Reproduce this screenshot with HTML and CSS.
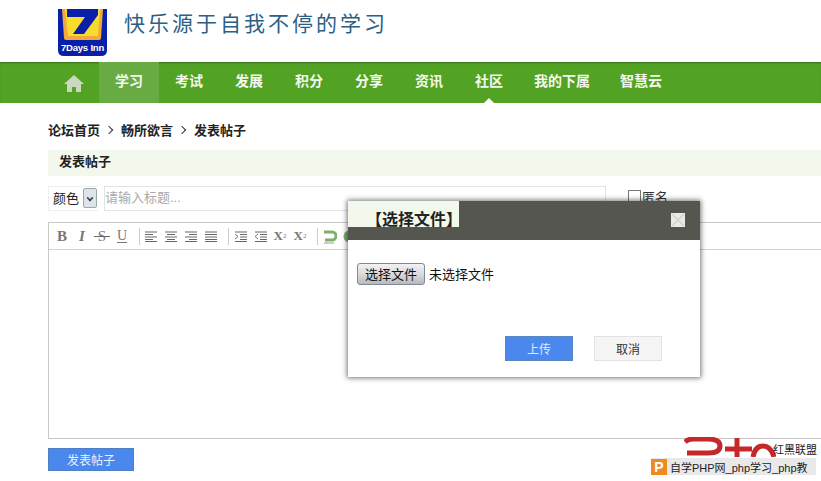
FILE: index.html
```html
<!DOCTYPE html>
<html lang="zh-CN">
<head>
    <meta charset="UTF-8">
    <meta name="viewport" content="width=device-width, initial-scale=1.0">
    <title>发表帖子</title>
    <link rel="stylesheet" href="styles.css">
</head>
<body>
    <svg width="0" height="0" class="defs">
        <symbol id="a-left" viewBox="0 0 12 11"><path d="M0 1h12M0 3.500h8M0 6h12M0 8.500h8M0 10.500h12" stroke="#666" fill="none"/></symbol>
        <symbol id="a-center" viewBox="0 0 12 11"><path d="M0 1h12M2 3.500h8M0 6h12M2 8.500h8M0 10.500h12" stroke="#666" fill="none"/></symbol>
        <symbol id="a-right" viewBox="0 0 12 11"><path d="M0 1h12M4 3.500h8M0 6h12M4 8.500h8M0 10.500h12" stroke="#666" fill="none"/></symbol>
        <symbol id="a-full" viewBox="0 0 12 11"><path d="M0 1h12M0 3.500h12M0 6h12M0 8.500h12M0 10.500h12" stroke="#666" fill="none"/></symbol>
        <symbol id="a-indent" viewBox="0 0 13 11"><path d="M1 1h12M6 3.500h7M6 6h7M6 8.500h7M1 10.500h12" stroke="#666" fill="none"/><path d="M1 3l3 2.500-3 2.500" stroke="#777" fill="none"/></symbol>
        <symbol id="a-outdent" viewBox="0 0 13 11"><path d="M1 1h12M6 3.500h7M6 6h7M6 8.500h7M1 10.500h12" stroke="#666" fill="none"/><path d="M4 3L1 5.500 4 8" stroke="#777" fill="none"/></symbol>
    </svg>

    <div class="header">
        <svg class="logo" width="50" height="47" viewBox="0 0 50 47">
            <path d="M0 0h49v41q0 6-6 6H6q-6 0-6-6z" fill="#0a1fa8"/>
            <path d="M4 0h41l-2 29q0 2-2 2H8q-2 0-2-2z" fill="#f0a93a"/>
            <path d="M7 0h35l-2 27H10z" fill="#f7dc2e"/>
            <path d="M9 0H40V6L26 25H15L27 8H9z" fill="#0a1fa8"/>
            <text x="24.500" y="42" text-anchor="middle" class="logo-text">7Days Inn</text>
        </svg>
        <div class="slogan">快乐源于自我不停的学习</div>
    </div>

    <div class="nav">
        <a class="nav-home" href="#">
            <svg width="20" height="17" viewBox="0 0 20 17">
                <path d="M10 0L0 9h3v8h5v-5h4v5h5V9h3z" fill="#cbd8c0"/>
            </svg>
        </a>
        <a class="nav-item active" href="#">学习</a>
        <a class="nav-item" href="#">考试</a>
        <a class="nav-item" href="#">发展</a>
        <a class="nav-item" href="#">积分</a>
        <a class="nav-item" href="#">分享</a>
        <a class="nav-item" href="#">资讯</a>
        <a class="nav-item current" href="#">社区</a>
        <a class="nav-item" href="#">我的下属</a>
        <a class="nav-item" href="#">智慧云</a>
    </div>

    <div class="content">
        <div class="crumbs">
            <span>论坛首页</span>
            <i class="crumb-arrow"></i>
            <span>畅所欲言</span>
            <i class="crumb-arrow"></i>
            <span>发表帖子</span>
        </div>
        <div class="title-bar">发表帖子</div>

        <div class="form-row">
            <div class="color-select">
                <span>颜色</span>
                <span class="select-btn"></span>
            </div>
            <div class="title-input">请输入标题...</div>
            <label class="anon"><span class="check"></span>匿名</label>
        </div>

        <div class="editor">
            <div class="toolbar">
                <span class="tool bold">B</span>
                <span class="tool italic">I</span>
                <span class="tool strike">S</span>
                <span class="tool under">U</span>
                <span class="sep"></span>
                <span class="tool"><svg width="12" height="11"><use href="#a-left"/></svg></span>
                <span class="tool"><svg width="12" height="11"><use href="#a-center"/></svg></span>
                <span class="tool"><svg width="12" height="11"><use href="#a-right"/></svg></span>
                <span class="tool"><svg width="12" height="11"><use href="#a-full"/></svg></span>
                <span class="sep"></span>
                <span class="tool"><svg width="13" height="11"><use href="#a-indent"/></svg></span>
                <span class="tool"><svg width="13" height="11"><use href="#a-outdent"/></svg></span>
                <span class="tool bold small">X<sub>2</sub></span>
                <span class="tool bold small">X<sup>2</sup></span>
                <span class="sep"></span>
                <span class="tool">
                    <svg width="15" height="15" viewBox="0 0 15 15">
                        <path d="M2 3h8a3.500 3.500 0 0 1 0 8H3" fill="none" stroke="#7fb069" stroke-width="3"/>
                        <path d="M2 14h10" stroke="#999"/>
                    </svg>
                </span>
                <span class="tool">
                    <svg width="15" height="15"><circle cx="7.500" cy="7.500" r="6" fill="#7fb069"/></svg>
                </span>
            </div>
        </div>

        <button class="submit-btn">发表帖子</button>
    </div>

    <div class="dialog">
        <div class="dialog-head">
            <div class="dialog-title">【选择文件】</div>
            <svg class="dialog-close" width="14" height="14" viewBox="0 0 14 14">
                <rect width="14" height="14" fill="#e9ebe6"/>
                <path d="M1 1l12 12M13 1L1 13" stroke="#d2d4cf" stroke-width="1.500"/>
            </svg>
        </div>
        <div class="file-row">
            <button class="file-btn">选择文件</button>
            <span class="file-name">未选择文件</span>
        </div>
        <div class="dialog-actions">
            <button class="upload-btn">上传</button>
            <button class="cancel-btn">取消</button>
        </div>
    </div>

    <div class="watermark">
        <svg class="wm-logo" width="92" height="20" viewBox="0 0 92 20">
            <path d="M1 5Q4 2 9 2H24Q36 2 36 9Q36 16 24 16H3" fill="none" stroke="#c5282a" stroke-width="5"/>
            <path d="M53 1V20M41 12H68" fill="none" stroke="#c5282a" stroke-width="5"/>
            <path d="M69 20Q71 9 79 9Q87 9 90 20" fill="none" stroke="#c5282a" stroke-width="5"/>
        </svg>
        <div class="wm-name">红黑联盟</div>
        <div class="wm-bar"><span class="wm-icon">P</span>自学PHP网_php学习_php教</div>
    </div>
</body>
</html>
```

FILE: styles.css
```css
html, body {
    height: 100%;
}

body {
    margin: 0;
    background-color: #fff;
    color: #222;
    font-family: "Liberation Sans", "Noto Sans CJK SC", sans-serif;
    font-size: 13px;
    overflow: hidden;
    position: relative;
}

.defs {
    position: absolute;
}

.header {
    height: 62px;
    display: flex;
    align-items: flex-start;
    padding-left: 58px;
    box-sizing: border-box;
}

.logo {
    margin-top: 9px;
    flex: none;
}

.logo-text {
    fill: #fff;
    font: bold 9.500px "Liberation Sans", sans-serif;
    letter-spacing: -0.200px;
}

.slogan {
    margin: 8px 0 0 16px;
    color: #2b5f86;
    font-size: 21px;
    line-height: 32px;
    letter-spacing: 3px;
    white-space: nowrap;
}

.nav {
    height: 41px;
    display: flex;
    padding-left: 44px;
    background-color: #52a224;
    box-shadow: inset 0 2px 2px -1px #33701a;
}

.nav-home {
    width: 55px;
    padding: 1px 0 0 5px;
    display: flex;
    align-items: center;
    justify-content: center;
    box-sizing: border-box;
}

.nav-item {
    padding: 0 15px;
    min-width: 30px;
    line-height: 39px;
    color: #f4f8ee;
    font-size: 14px;
    font-weight: 700;
    text-decoration: none;
    text-align: center;
    position: relative;
}

.nav-item.active {
    background-color: #67ab42;
}

.nav-item.current::after {
    content: "";
    position: absolute;
    left: 50%;
    bottom: 0;
    margin-left: -5px;
    border: 5px solid transparent;
    border-top: 0;
    border-bottom-color: #fff;
}

.content {
    padding: 18px 0 0 48px;
}

.crumbs {
    display: flex;
    align-items: center;
    height: 17px;
    font-size: 13px;
    font-weight: 700;
    color: #222;
}

.crumb-arrow {
    width: 5px;
    height: 5px;
    margin: 0 9px 0 6px;
    border-top: 1px solid #333;
    border-right: 1px solid #333;
    transform: rotate(45deg);
}

.title-bar {
    height: 26px;
    margin-top: 12px;
    padding-left: 11px;
    background-color: #f2f8ec;
    font-size: 13px;
    font-weight: 700;
    line-height: 23px;
}

.form-row {
    display: flex;
    height: 25px;
    margin-top: 10px;
}

.color-select {
    width: 50px;
    display: flex;
    align-items: center;
    justify-content: space-between;
    padding: 0 1px 2px 4px;
    box-sizing: border-box;
    border: 1px solid #eee;
    border-right: 0;
    color: #222;
}

.select-btn {
    width: 12px;
    height: 18px;
    border: 1px solid #9aa;
    border-radius: 2px;
    background-color: #dfe3ea;
    position: relative;
}

.select-btn::after {
    content: "";
    position: absolute;
    left: 3px;
    top: 6px;
    width: 4px;
    height: 4px;
    border-right: 2px solid #445;
    border-bottom: 2px solid #445;
    transform: rotate(45deg) scale(0.8);
}

.title-input {
    width: 502px;
    margin-left: 6px;
    box-sizing: border-box;
    border: 1px solid #e2e2e2;
    color: #aaa;
    line-height: 21px;
}

.anon {
    display: flex;
    align-items: center;
    align-self: flex-start;
    height: 20px;
    margin-left: 22px;
    color: #333;
}

.check {
    width: 11px;
    height: 11px;
    margin-right: 1px;
    border: 1px solid #777;
}

.editor {
    height: 215px;
    margin-top: 11px;
    border: 1px solid #c8c8c8;
    border-right: 0;
}

.toolbar {
    height: 26px;
    display: flex;
    align-items: center;
    padding-left: 3px;
    border-bottom: 1px solid #d4d4d4;
}

.tool {
    width: 20px;
    flex: none;
    display: flex;
    align-items: center;
    justify-content: center;
    color: #777;
    font-family: "Liberation Serif", serif;
    font-size: 15px;
    position: relative;
}

.bold {
    font-weight: 700;
}

.italic {
    font-style: italic;
    font-weight: 700;
}

.strike::after {
    content: "";
    position: absolute;
    left: 2px;
    right: 2px;
    top: 50%;
    height: 1px;
    background-color: #666;
}

.under {
    font-size: 14px;
    text-decoration: underline;
    text-underline-offset: 2px;
}

.small {
    font-size: 13px;
}

.small sub,
.small sup {
    font-size: 7px;
    font-weight: 400;
}

.sep {
    width: 1px;
    height: 17px;
    margin: 0 1px 0 7px;
    flex: none;
    background-color: #ccc;
}

button {
    font-family: inherit;
    cursor: pointer;
}

.submit-btn {
    display: block;
    width: 86px;
    height: 23px;
    margin-top: 9px;
    padding: 0;
    border: 1px solid #4f7fc4;
    background-color: #4a88ee;
    color: #eaf2ff;
    font-size: 12px;
}

.dialog {
    position: absolute;
    left: 348px;
    top: 201px;
    width: 352px;
    height: 176px;
    background-color: #fff;
    box-shadow: 0 0 5px 1px rgba(0, 0, 0, 0.55);
}

.dialog-head {
    height: 39px;
    background-color: #55564f;
    position: relative;
}

.dialog-title {
    width: 111px;
    height: 26px;
    box-sizing: border-box;
    padding-left: 18px;
    background-color: #f2f8ec;
    color: #222;
    font-size: 16px;
    font-weight: 700;
    line-height: 37px;
    white-space: nowrap;
}

.dialog-close {
    position: absolute;
    right: 15px;
    top: 12px;
}

.file-row {
    display: flex;
    align-items: center;
    gap: 4px;
    margin: 23px 0 0 9px;
    color: #111;
}

.file-btn {
    width: 68px;
    height: 22px;
    padding: 0 0 2px;
    border: 1px solid #7d8a99;
    border-radius: 3px;
    background: linear-gradient(#f2f2f2, #d8d8d8 55%, #b8b8b8);
    color: #111;
    font-size: 13px;
}

.file-name {
    padding-bottom: 2px;
}

.dialog-actions {
    display: flex;
    gap: 21px;
    margin: 51px 0 0 157px;
}

.upload-btn,
.cancel-btn {
    width: 68px;
    height: 25px;
    padding: 0;
    font-size: 12px;
}

.upload-btn {
    border: 1px solid #5a86c0;
    background-color: #4a88ee;
    color: #dfeaff;
}

.cancel-btn {
    border: 1px solid #e2e2e2;
    background-color: #f5f5f5;
    color: #333;
}

.watermark {
    position: absolute;
    left: 651px;
    top: 436px;
    width: 170px;
    height: 45px;
}

.wm-logo {
    position: absolute;
    left: 33px;
    top: 1px;
}

.wm-name {
    position: absolute;
    left: 122px;
    top: 8px;
    color: #222;
    font-size: 11px;
    line-height: 13px;
    white-space: nowrap;
}

.wm-bar {
    position: absolute;
    left: 0;
    top: 22px;
    width: 165px;
    height: 17px;
    display: flex;
    align-items: center;
    background-color: #e9e9e9;
    color: #222;
    font-size: 11px;
    white-space: nowrap;
    overflow: hidden;
}

.wm-icon {
    width: 16px;
    height: 16px;
    margin-right: 3px;
    flex: none;
    background-color: #ee8a1e;
    color: #fff;
    font-size: 14px;
    font-weight: 700;
    line-height: 16px;
    text-align: center;
}
```
